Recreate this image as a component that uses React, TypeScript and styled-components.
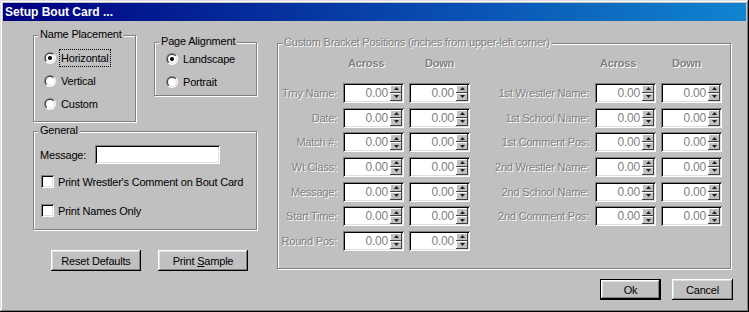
import React from 'react';
import styled, { createGlobalStyle, css } from 'styled-components';

const GlobalStyle = createGlobalStyle`
  html, body {
    margin: 0;
    padding: 0;
    background: #c0c0c0;
  }
  body {
    font-family: "Liberation Sans", Arial, sans-serif;
    font-size: 11px;
    letter-spacing: -0.2px;
    color: #000;
  }
`;

const sunken = css`
  box-sizing: border-box;
  background: #fff;
  box-shadow: inset 1px 1px 0 #808080, inset -1px -1px 0 #fff,
    inset 2px 2px 0 #000, inset -2px -2px 0 #dfdfdf;
  padding: 2px;
`;

const disabledText = css`
  color: #808080;
  text-shadow: 1px 1px 0 #fff;
`;

const Window = styled.div`
  box-sizing: border-box;
  width: 749px;
  height: 312px;
  padding: 3px;
  background: #c0c0c0;
  box-shadow: inset -1px -1px 0 #000, inset 1px 1px 0 #dfdfdf,
    inset -2px -2px 0 #808080, inset 2px 2px 0 #fff;
  display: flex;
  flex-direction: column;
`;

const TitleBar = styled.div`
  height: 18px;
  display: flex;
  align-items: center;
  padding-left: 2px;
  background: linear-gradient(90deg, #000080 0%, #1084d0 100%);
  color: #fff;
  font-weight: bold;
  font-size: 12px;
  letter-spacing: 0;
`;

const Body = styled.div`
  display: flex;
  padding: 14px 0 0 30px;
`;

const LeftColumn = styled.div`
  width: 224px;
  display: flex;
  flex-direction: column;
`;

const TopRow = styled.div`
  display: flex;
  align-items: flex-start;
  gap: 18px;
`;

const Group = styled.div<{ $w: number; $h: number; $top?: number }>`
  position: relative;
  box-sizing: border-box;
  width: ${p => p.$w}px;
  height: ${p => p.$h}px;
  margin-top: ${p => p.$top || 0}px;
  border: 1px solid #808080;
  box-shadow: 1px 1px 0 #fff, inset 1px 1px 0 #fff;
`;

const Legend = styled.span<{ $disabled?: boolean }>`
  position: absolute;
  top: -8px;
  left: 4px;
  padding: 0 2px;
  line-height: 13px;
  background: #c0c0c0;
  white-space: nowrap;
  ${p => p.$disabled && disabledText}
`;

const RadioList = styled.div<{ $top: number; $left: number }>`
  display: flex;
  flex-direction: column;
  gap: 5px;
  padding: ${p => p.$top}px 0 0 ${p => p.$left}px;
`;

const RadioRow = styled.div`
  display: flex;
  align-items: center;
  gap: 3px;
  height: 18px;
`;

const FocusLabel = styled.span<{ $focus?: boolean }>`
  border: 1px dotted ${p => (p.$focus ? '#000' : 'transparent')};
  padding: 0 1px;
  line-height: 16px;
`;

const GeneralBody = styled.div`
  display: flex;
  flex-direction: column;
  padding: 13px 0 0 6px;
`;

const MessageRow = styled.div`
  display: flex;
  align-items: center;
  height: 19px;
`;

const MessageLabel = styled.span`
  width: 55px;
`;

const TextInput = styled.div`
  ${sunken}
  width: 125px;
  height: 19px;
`;

const CheckRow = styled.div<{ $top: number }>`
  display: flex;
  align-items: center;
  gap: 4px;
  height: 13px;
  margin: ${p => p.$top}px 0 0 1px;
`;

const CheckBox = styled.div`
  ${sunken}
  width: 13px;
  height: 13px;
`;

const ButtonRow = styled.div<{ $top: number; $left?: number; $gap: number }>`
  display: flex;
  gap: ${p => p.$gap}px;
  margin-top: ${p => p.$top}px;
  padding-left: ${p => p.$left || 0}px;
`;

const Button = styled.div<{ $w: number; $default?: boolean }>`
  box-sizing: border-box;
  width: ${p => p.$w}px;
  height: 21px;
  display: flex;
  align-items: center;
  justify-content: center;
  background: #c0c0c0;
  box-shadow: inset -1px -1px 0 #000, inset 1px 1px 0 #fff,
    inset -2px -2px 0 #808080, inset 2px 2px 0 #dfdfdf;
  ${p =>
    p.$default &&
    css`
      border: 1px solid #000;
    `}
`;

const RightColumn = styled.div`
  display: flex;
  flex-direction: column;
  margin: 8px 0 0 20px;
`;

const BracketGrid = styled.div`
  display: grid;
  grid-template-columns: 60px 61px 61px 115px 61px 61px;
  grid-template-rows: 22.33px repeat(7, 20px);
  column-gap: 5px;
  row-gap: 4.67px;
  padding-top: 12px;
`;

const ColHeader = styled.span<{ $offset: number }>`
  align-self: start;
  padding-left: ${p => p.$offset}px;
  line-height: 14px;
  font-weight: bold;
  ${disabledText}
`;

const RowLabel = styled.span`
  display: flex;
  align-items: center;
  justify-content: flex-end;
  padding-right: 1px;
  white-space: nowrap;
  ${disabledText}
`;

const SpinBox = styled.div`
  ${sunken}
  display: flex;
  width: 61px;
  height: 20px;
`;

const SpinValue = styled.span`
  flex: 1;
  text-align: right;
  padding-right: 2px;
  line-height: 16px;
  font-size: 12px;
  color: #808080;
`;

const SpinButtons = styled.div`
  width: 12px;
  display: flex;
  flex-direction: column;
`;

const SpinButton = styled.div`
  flex: 1;
  display: flex;
  align-items: center;
  justify-content: center;
  background: #c0c0c0;
  box-shadow: inset -1px -1px 0 #404040, inset 1px 1px 0 #fff;
`;

const DialogButtons = styled.div`
  display: flex;
  justify-content: flex-end;
  gap: 11px;
  margin: 10px -2px 0 0;
`;

const Radio = ({ checked }: { checked?: boolean }) => (
  <svg width="12" height="12" viewBox="0 0 12 12">
    <defs>
      <linearGradient id="rOuter" x1="0" y1="0" x2="1" y2="1">
        <stop offset="0.5" stopColor="#808080" />
        <stop offset="0.5" stopColor="#ffffff" />
      </linearGradient>
      <linearGradient id="rInner" x1="0" y1="0" x2="1" y2="1">
        <stop offset="0.5" stopColor="#404040" />
        <stop offset="0.5" stopColor="#dfdfdf" />
      </linearGradient>
    </defs>
    <circle cx="6" cy="6" r="6" fill="url(#rOuter)" />
    <circle cx="6" cy="6" r="5" fill="url(#rInner)" />
    <circle cx="6" cy="6" r="4" fill="#fff" />
    {checked && <circle cx="6" cy="6" r="2" fill="#000" />}
  </svg>
);

const Arrow = ({ down }: { down?: boolean }) => (
  <svg width="5" height="3" viewBox="0 0 5 3">
    <polygon points={down ? '0,0 5,0 2.5,3' : '2.5,0 5,3 0,3'} fill="#202020" />
  </svg>
);

const Spin = () => (
  <SpinBox>
    <SpinValue>0.00</SpinValue>
    <SpinButtons>
      <SpinButton>
        <Arrow />
      </SpinButton>
      <SpinButton>
        <Arrow down />
      </SpinButton>
    </SpinButtons>
  </SpinBox>
);

const leftRows = ['Trny Name:', 'Date:', 'Match #:', 'Wt Class:', 'Message:', 'Start Time:', 'Round Pos:'];
const rightRows = [
  '1st Wrestler Name:',
  '1st School Name:',
  '1st Comment Pos:',
  '2nd Wrestler Name:',
  '2nd School Name:',
  '2nd Comment Pos:',
];

export default function App() {
  return (
    <>
      <GlobalStyle />
      <Window>
        <TitleBar>Setup Bout Card ...</TitleBar>
        <Body>
          <LeftColumn>
            <TopRow>
              <Group $w={103} $h={87}>
                <Legend>Name Placement</Legend>
                <RadioList $top={13} $left={10}>
                  <RadioRow>
                    <Radio checked />
                    <FocusLabel $focus>Horizontal</FocusLabel>
                  </RadioRow>
                  <RadioRow>
                    <Radio />
                    <FocusLabel>Vertical</FocusLabel>
                  </RadioRow>
                  <RadioRow>
                    <Radio />
                    <FocusLabel>Custom</FocusLabel>
                  </RadioRow>
                </RadioList>
              </Group>
              <Group $w={103} $h={54} $top={7}>
                <Legend>Page Alignment</Legend>
                <RadioList $top={7} $left={11}>
                  <RadioRow>
                    <Radio checked />
                    <FocusLabel>Landscape</FocusLabel>
                  </RadioRow>
                  <RadioRow>
                    <Radio />
                    <FocusLabel>Portrait</FocusLabel>
                  </RadioRow>
                </RadioList>
              </Group>
            </TopRow>
            <Group $w={224} $h={99} $top={9}>
              <Legend>General</Legend>
              <GeneralBody>
                <MessageRow>
                  <MessageLabel>Message:</MessageLabel>
                  <TextInput />
                </MessageRow>
                <CheckRow $top={11}>
                  <CheckBox />
                  <span>Print Wrestler's Comment on Bout Card</span>
                </CheckRow>
                <CheckRow $top={16}>
                  <CheckBox />
                  <span>Print Names Only</span>
                </CheckRow>
              </GeneralBody>
            </Group>
            <ButtonRow $top={20} $left={18} $gap={17}>
              <Button $w={90}>Reset Defaults</Button>
              <Button $w={90}>
                <span>
                  Print <u>S</u>ample
                </span>
              </Button>
            </ButtonRow>
          </LeftColumn>
          <RightColumn>
            <Group $w={454} $h={226}>
              <Legend $disabled>Custom Bracket Positions (inches from upper-left corner)</Legend>
              <BracketGrid>
                <span />
                <ColHeader $offset={5}>Across</ColHeader>
                <ColHeader $offset={16}>Down</ColHeader>
                <span />
                <ColHeader $offset={5}>Across</ColHeader>
                <ColHeader $offset={11}>Down</ColHeader>
                {leftRows.map((label, i) => (
                  <React.Fragment key={label}>
                    <RowLabel>{label}</RowLabel>
                    <Spin />
                    <Spin />
                    {rightRows[i] && (
                      <>
                        <RowLabel>{rightRows[i]}</RowLabel>
                        <Spin />
                        <Spin />
                      </>
                    )}
                  </React.Fragment>
                ))}
              </BracketGrid>
            </Group>
            <DialogButtons>
              <Button $w={61} $default>
                Ok
              </Button>
              <Button $w={61}>Cancel</Button>
            </DialogButtons>
          </RightColumn>
        </Body>
      </Window>
    </>
  );
}
